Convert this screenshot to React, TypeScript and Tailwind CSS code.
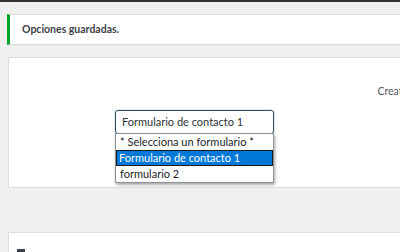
import React from "react";

const font = { fontFamily: 'Lato, "Noto Sans", sans-serif' };

const App = () => {
  const opciones = [
    { label: "* Selecciona un formulario *", active: false },
    { label: "Formulario de contacto 1", active: true },
    { label: "formulario 2", active: false },
  ];

  return (
    <div className="w-[400px] h-[252px] overflow-hidden bg-[#f0f0f1] text-[#3c434a]" style={font}>
      <div className="h-[2px] bg-[#2c3338]" />

      {/* aviso */}
      <div className="ml-[7px] mt-[12px] h-[31px] flex items-center bg-white border-l-[3px] border-l-[#00a32a] border-y border-y-[#dcdcde] shadow-[0_1px_1px_rgba(0,0,0,0.04)]">
        <p className="pl-[12px] text-[10.5px] font-bold text-[#3c434a] whitespace-nowrap">Opciones guardadas.</p>
      </div>

      {/* panel */}
      <div className="ml-[8px] mt-[12px] h-[131px] bg-white border border-[#dcdcde] border-r-0 relative">
        <div className="flex justify-end pt-[26px] h-[52px] overflow-hidden">
          <span className="text-[10.5px] text-[#50575e] -mr-[8px] whitespace-nowrap">Create</span>
        </div>
        <div className="pl-[106px] relative">
          <div className="w-[159px] h-[24px] border border-[#2c4f5f] rounded-[3px] flex items-center pl-[6px] text-[11px] text-[#2c3338] whitespace-nowrap shadow-[0_0_0_1px_rgba(34,113,177,0.15)]">
            Formulario de contacto 1
          </div>
          <div className="absolute left-[106px] top-[23px] w-[159px] bg-white border border-[#8c8f94] shadow-[1px_2px_3px_rgba(0,0,0,0.35)] z-10">
            {opciones.map((o, i) => (
              <div
                key={i}
                className={
                  o.active
                    ? "h-[16px] flex items-center pl-[3px] text-[11px] text-white bg-[#0078d7] whitespace-nowrap outline outline-1 outline-[#1b1b1b] -outline-offset-1"
                    : "h-[16px] flex items-center pl-[4px] text-[11px] text-[#1d2327] whitespace-nowrap"
                }
              >
                {o.label}
              </div>
            ))}
          </div>
        </div>
      </div>

      {/* segundo panel */}
      <div className="ml-[8px] mt-[44px] h-[30px] bg-white border border-[#dcdcde] border-r-0 pt-[16px] pl-[8px]">
        <div className="w-[8px] h-[4px] bg-[#3c434a]" />
      </div>
    </div>
  );
};

export default App;
